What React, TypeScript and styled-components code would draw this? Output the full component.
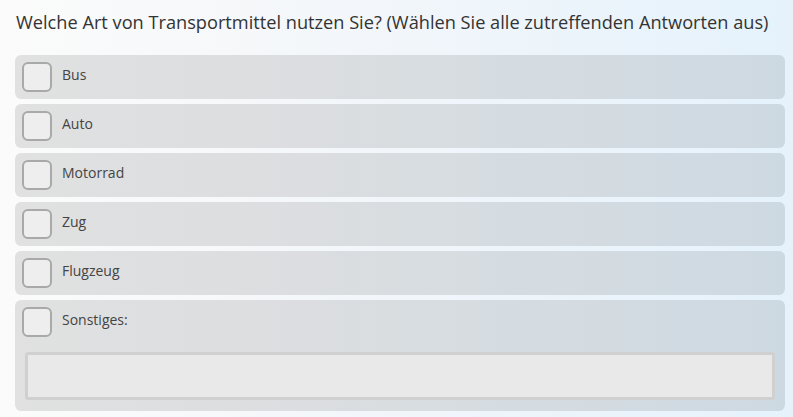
import React from "react";
import styled, { createGlobalStyle } from "styled-components";

const Global = createGlobalStyle`
  html, body { margin: 0; padding: 0; }
  body {
    width: 793px;
    height: 417px;
    overflow: hidden;
    background: linear-gradient(90deg, #fbfbfb 0%, #f4f7fa 40%, #e5f2fc 100%);
    font-family: "Open Sans", "Liberation Sans", sans-serif;
  }
`;

const Page = styled.div`
  padding: 9px 8px 0 15px;
`;

const Title = styled.h1`
  margin: 0 0 20px 1px;
  font-size: 18.2px;
  font-weight: 400;
  line-height: 26px;
  color: #333;
  white-space: nowrap;
`;

const List = styled.div`
  display: flex;
  flex-direction: column;
  gap: 5px;
`;

const Row = styled.label`
  display: flex;
  flex-direction: column;
  background: rgba(0, 0, 0, 0.1);
  border-radius: 6px;
  padding: 7px;
`;

const Line = styled.div`
  display: flex;
  align-items: center;
  gap: 10px;
`;

const Box = styled.span`
  width: 30px;
  height: 30px;
  box-sizing: border-box;
  border: 2px solid #a9a9a9;
  border-radius: 6px;
  background: rgba(240, 240, 240, 0.85);
  flex: none;
`;

const Text = styled.span`
  font-size: 14px;
  line-height: 20px;
  padding-bottom: 4px;
  color: #444;
`;

const Input = styled.div`
  margin: 15px 3px 4px 3px;
  height: 48px;
  box-sizing: border-box;
  border: 3px solid #d0d0d0;
  border-radius: 3px;
  background: #e9e9e9;
`;

const options = ["Bus", "Auto", "Motorrad", "Zug", "Flugzeug"];

export default function App() {
  return (
    <>
      <Global />
      <Page>
        <Title>Welche Art von Transportmittel nutzen Sie? (Wählen Sie alle zutreffenden Antworten aus)</Title>
        <List>
          {options.map((o) => (
            <Row key={o}>
              <Line>
                <Box />
                <Text>{o}</Text>
              </Line>
            </Row>
          ))}
          <Row>
            <Line>
              <Box />
              <Text>Sonstiges:</Text>
            </Line>
            <Input />
          </Row>
        </List>
      </Page>
    </>
  );
}
